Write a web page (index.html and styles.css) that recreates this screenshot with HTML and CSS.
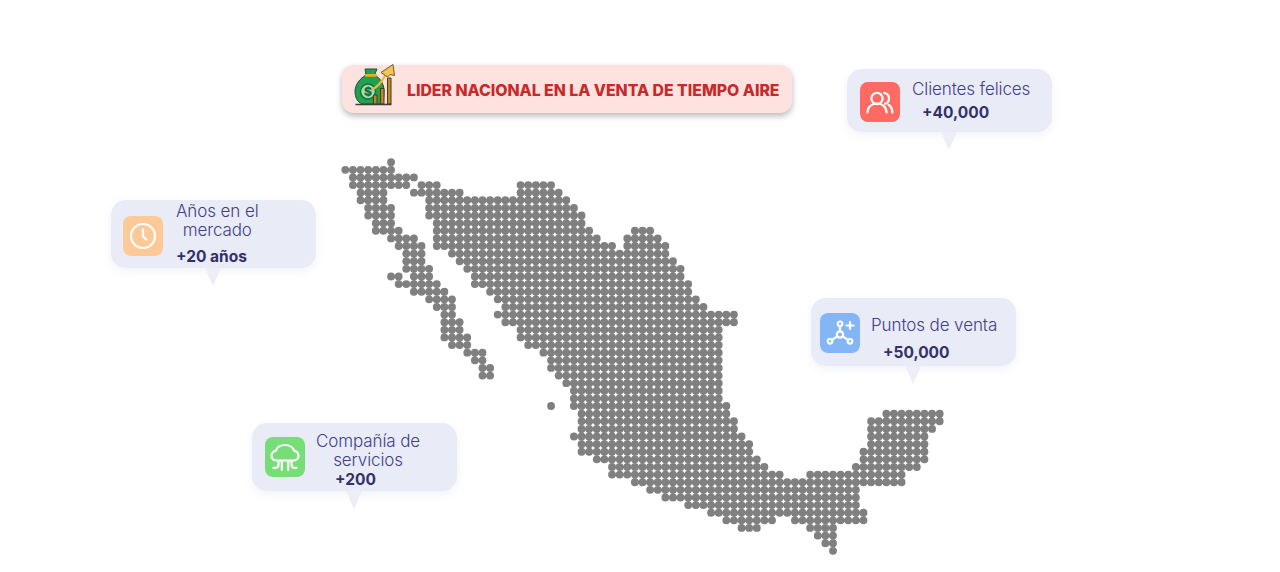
FILE: index.html
```html
<!DOCTYPE html>
<html lang="es">
<head>
<meta charset="utf-8">
<title>Cobertura nacional</title>
<link rel="stylesheet" href="styles.css">
</head>
<body>
<main class="stage">
  <svg class="map" viewBox="-0.55 -0.55 79.1 52.1" aria-label="Mapa de México">
    <path class="map-dots" d="M6 0h.01
M0 1H6.01
M1 2H9.01
M1 3H8.01M10 3H12.01M23 3H27.01
M2 4H5.01M9 4H15.01M23 4H28.01
M2 5H5.01M11 5H29.01
M3 6H6.01M11 6H30.01
M3 7H6.01M11 7H31.01
M4 8H6.01M12 8H31.01
M4 9H7.01M12 9H32.01M38 9H40.01
M6 10H9.01M12 10H33.01M37 10H41.01
M7 11H10.01M12 11H35.01M37 11H42.01
M8 12H10.01M14 12H42.01
M8 13H10.01M15 13H43.01
M8 14H11.01M16 14H44.01
M6 15H7.01M9 15H11.01M17 15H44.01
M7 16H12.01M17 16H45.01
M9 17H13.01M19 17H45.01
M11 18H14.01M20 18H46.01
M12 19H14.01M21 19H47.01
M13 20H14.01M20 20H51.01
M13 21H15.01M21 21H51.01
M13 22H15.01M23 22H49.01
M13 23H16.01M23 23H49.01
M14 24H16.01M24 24H49.01
M16 25H18.01M26 25H49.01
M17 26H18.01M27 26H49.01
M18 27H19.01M27 27H49.01
M18 28H19.01M28 28H49.01
M29 29H49.01
M30 30H49.01
M30 31H49.01
M27 32h.01M30 32H50.01
M31 33H50.01M71 33H78.01
M31 34H51.01M69 34H78.01
M31 35H51.01M69 35H77.01
M30 36H52.01M69 36H76.01
M31 37H53.01M69 37H76.01
M31 38H53.01M68 38H76.01
M33 39H54.01M68 39H76.01
M35 40H55.01M67 40H75.01
M35 41H57.01M61 41H73.01
M38 42H73.01
M40 43H67.01
M42 44H67.01
M45 45H67.01
M48 46H68.01
M50 47H56.01M59 47H68.01
M52 48H54.01M61 48H64.01
M62 49H64.01
M63 50H64.01
M64 51h.01"/>
  </svg>

  <header class="banner">
    <svg class="banner-icon" viewBox="0 0 44 44" aria-hidden="true">
      <path class="bag-outline" d="M12 6h12l-2.500 6c6 3 9.500 9 9.500 16 0 7-1 12-2 13H9c-5-2-7-7.500-7-12.500 0-7 5-13 11-16.500z"/>
      <rect class="bag-tie" x="12" y="11" width="12" height="2.800" rx="1"/>
      <circle class="coin" cx="15" cy="28.500" r="7.500"/>
      <text class="coin-sign" x="15" y="33">$</text>
      <path class="bars" d="M20.500 41V32h3.500v9zM27.500 41V25.500H31V41zM34.500 41V15h3.500v26z"/>
      <path class="base" d="M2.500 41.500h36"/>
      <path class="arrow" d="M19 26c5-1 9-6 13.500-14"/>
      <path class="arrow-head" d="M28 9.500 40 1.500l1.500 11-4.500-1-2.500 2.500z"/>
    </svg>
    <h1 class="banner-title">LIDER NACIONAL EN LA VENTA DE TIEMPO AIRE</h1>
  </header>

  <article class="stat stat-clients">
    <span class="tile tile-red">
      <svg viewBox="0 0 40 40" aria-hidden="true">
        <circle cx="17" cy="16.500" r="5.600"/>
        <path d="M7.500 30.500c0-5.500 4-9 9.500-9s9.500 3.500 9.500 9"/>
        <path d="M24 10.800c3 .2 5 2.600 5 5.700 0 2.600-1.600 4.600-4 5.300"/>
        <path d="M28.500 22.800c2.400 1.500 3.800 4.300 3.800 7.700"/>
      </svg>
    </span>
    <div class="stat-text">
      <p class="stat-label">Clientes felices</p>
      <p class="stat-value">+40,000</p>
    </div>
  </article>

  <article class="stat stat-years">
    <span class="tile tile-orange">
      <svg viewBox="0 0 40 40" aria-hidden="true">
        <circle cx="20" cy="20" r="12"/>
        <path d="M20 13v7.500l3.500 3"/>
      </svg>
    </span>
    <div class="stat-text">
      <p class="stat-label">Años en el<br>mercado</p>
      <p class="stat-value">+20 años</p>
    </div>
  </article>

  <article class="stat stat-services">
    <span class="tile tile-green">
      <svg viewBox="0 0 40 40" aria-hidden="true">
        <path d="M11.500 23.500c-2.800 0-5-2.100-5-4.800 0-2.500 1.900-4.500 4.300-4.800C11.800 10.500 15.500 8 20 8s8.200 2.500 9.200 5.900c2.400.3 4.300 2.300 4.300 4.800 0 2.700-2.200 4.800-5 4.800z"/>
        <path d="M16.800 24v9M23.200 24v9"/>
        <path d="M13.500 24v3.500c0 2-1 3.300-3 3.300H8.500M26.500 24v3.500c0 2 1 3.300 3 3.300h2"/>
      </svg>
    </span>
    <div class="stat-text">
      <p class="stat-label">Compañía de<br>servicios</p>
      <p class="stat-value">+200</p>
    </div>
  </article>

  <article class="stat stat-sales">
    <span class="tile tile-blue">
      <svg viewBox="0 0 40 40" aria-hidden="true">
        <circle cx="20" cy="21.500" r="3.200"/>
        <circle cx="20" cy="10.800" r="2.300"/>
        <circle cx="10" cy="28.300" r="2.300"/>
        <circle cx="30" cy="28.300" r="2.300"/>
        <path d="M20 13.100v5.200M17.300 23.300l-5.400 3.600M22.700 23.300l5.400 3.600M30 9v7M26.500 12.500h7"/>
      </svg>
    </span>
    <div class="stat-text">
      <p class="stat-label">Puntos de venta</p>
      <p class="stat-value">+50,000</p>
    </div>
  </article>
</main>
</body>
</html>
```
FILE: styles.css
```css
* { box-sizing: border-box; }

html, body {
  margin: 0;
  height: 100%;
  background: #fff;
  overflow: hidden;
}

body {
  font-family: "Inter", "Liberation Sans", sans-serif;
}

.stage {
  position: relative;
  width: 1280px;
  height: 572px;
}

/* Dot map: one stroke per row, a dot at each grid step */
.map {
  position: absolute;
  left: 341px;
  top: 158.200px;
  width: 603px;
  height: 397px;
}

.map-dots {
  fill: none;
  stroke: #808080;
  stroke-width: 1.03;
  stroke-linecap: round;
  stroke-dasharray: 0 1;
}

/* Banner */
.banner {
  position: absolute;
  left: 342px;
  top: 65px;
  width: 450px;
  height: 48px;
  display: flex;
  align-items: center;
  gap: 10px;
  padding-left: 11px;
  background: #fde2e0;
  border-radius: 12px;
  box-shadow: 0 3px 6px rgba(0, 0, 0, .28);
}

.banner-icon {
  flex: none;
  width: 44px;
  height: 44px;
  margin-top: -8px;
}

.banner-title {
  margin: 2px 0 0;
  font-size: 15.800px;
  font-weight: 800;
  color: #c62a2a;
  white-space: nowrap;
}

.bag-outline { fill: #1fa24f; stroke: #2c4a33; stroke-width: 1; }
.bag-tie { fill: #e9a92b; }
.coin { fill: #9fdcae; stroke: #1c6d39; stroke-width: 1.500; }
.coin-sign {
  font-size: 12px;
  font-weight: 900;
  fill: #1c6d39;
  text-anchor: middle;
}
.bars { fill: #b98a28; stroke: #4a3a18; stroke-width: 1; }
.base { fill: none; stroke: #3c3c3c; stroke-width: 1.500; }
.arrow { fill: none; stroke: #f1b93c; stroke-width: 2.400; }
.arrow-head { fill: #f5c44e; stroke: #4a3a18; stroke-width: .8; }

/* Stat callouts pinned on the map */
.stat {
  position: absolute;
  width: 205px;
  height: 68px;
  display: flex;
  align-items: center;
  gap: 13px;
  padding-left: 12px;
  background: #e9ecf6;
  border-radius: 15px;
  box-shadow: 0 3px 8px rgba(150, 160, 200, .14);
}

.stat::after {
  content: "";
  position: absolute;
  top: 100%;
  left: 94px;
  border-style: solid;
  border-width: 18px 8px 0;
  border-color: #eceef8 transparent transparent;
}

.stat-clients { left: 847px; top: 69px; height: 63px; padding-left: 13px; gap: 12px; }
.stat-years { left: 111px; top: 200px; }
.stat-services { left: 252px; top: 423px; padding-left: 13px; gap: 11px; }
.stat-sales { left: 811px; top: 298px; padding-left: 9px; gap: 11px; }

.tile {
  flex: none;
  width: 40px;
  height: 40px;
  border-radius: 8px;
}

.tile svg {
  display: block;
  width: 40px;
  height: 40px;
  fill: none;
  stroke: #fff;
  stroke-width: 2.200;
  stroke-linecap: round;
  stroke-linejoin: round;
}

.tile-red { background: #ff6a63; margin-top: 3px; }
.tile-orange { background: #fdc997; margin-top: 4px; }
.tile-green { background: #76dd77; }
.tile-blue { background: #84b6f5; margin-top: 2px; }

.stat-text {
  display: flex;
  flex-direction: column;
  align-items: flex-start;
}

.stat-label {
  margin: 0;
  font-size: 17px;
  line-height: 19px;
  font-weight: 300;
  letter-spacing: -.1px;
  text-align: center;
  color: #3f3f8c;
}

.stat-value {
  margin: 0;
  font-size: 15.500px;
  line-height: 20px;
  font-weight: 700;
  color: #33306b;
}

.stat-clients .stat-text { margin-top: 1px; }
.stat-clients .stat-value { margin: 4px 0 0 10px; }
.stat-years .stat-text { margin-top: 1px; }
.stat-years .stat-value { margin-top: 7px; }
.stat-services .stat-text { margin-top: 8px; }
.stat-services .stat-value { margin: 0 0 0 19px; }
.stat-sales .stat-text { margin-top: 15px; }
.stat-sales .stat-value { margin: 8px 0 0 12px; }
```
